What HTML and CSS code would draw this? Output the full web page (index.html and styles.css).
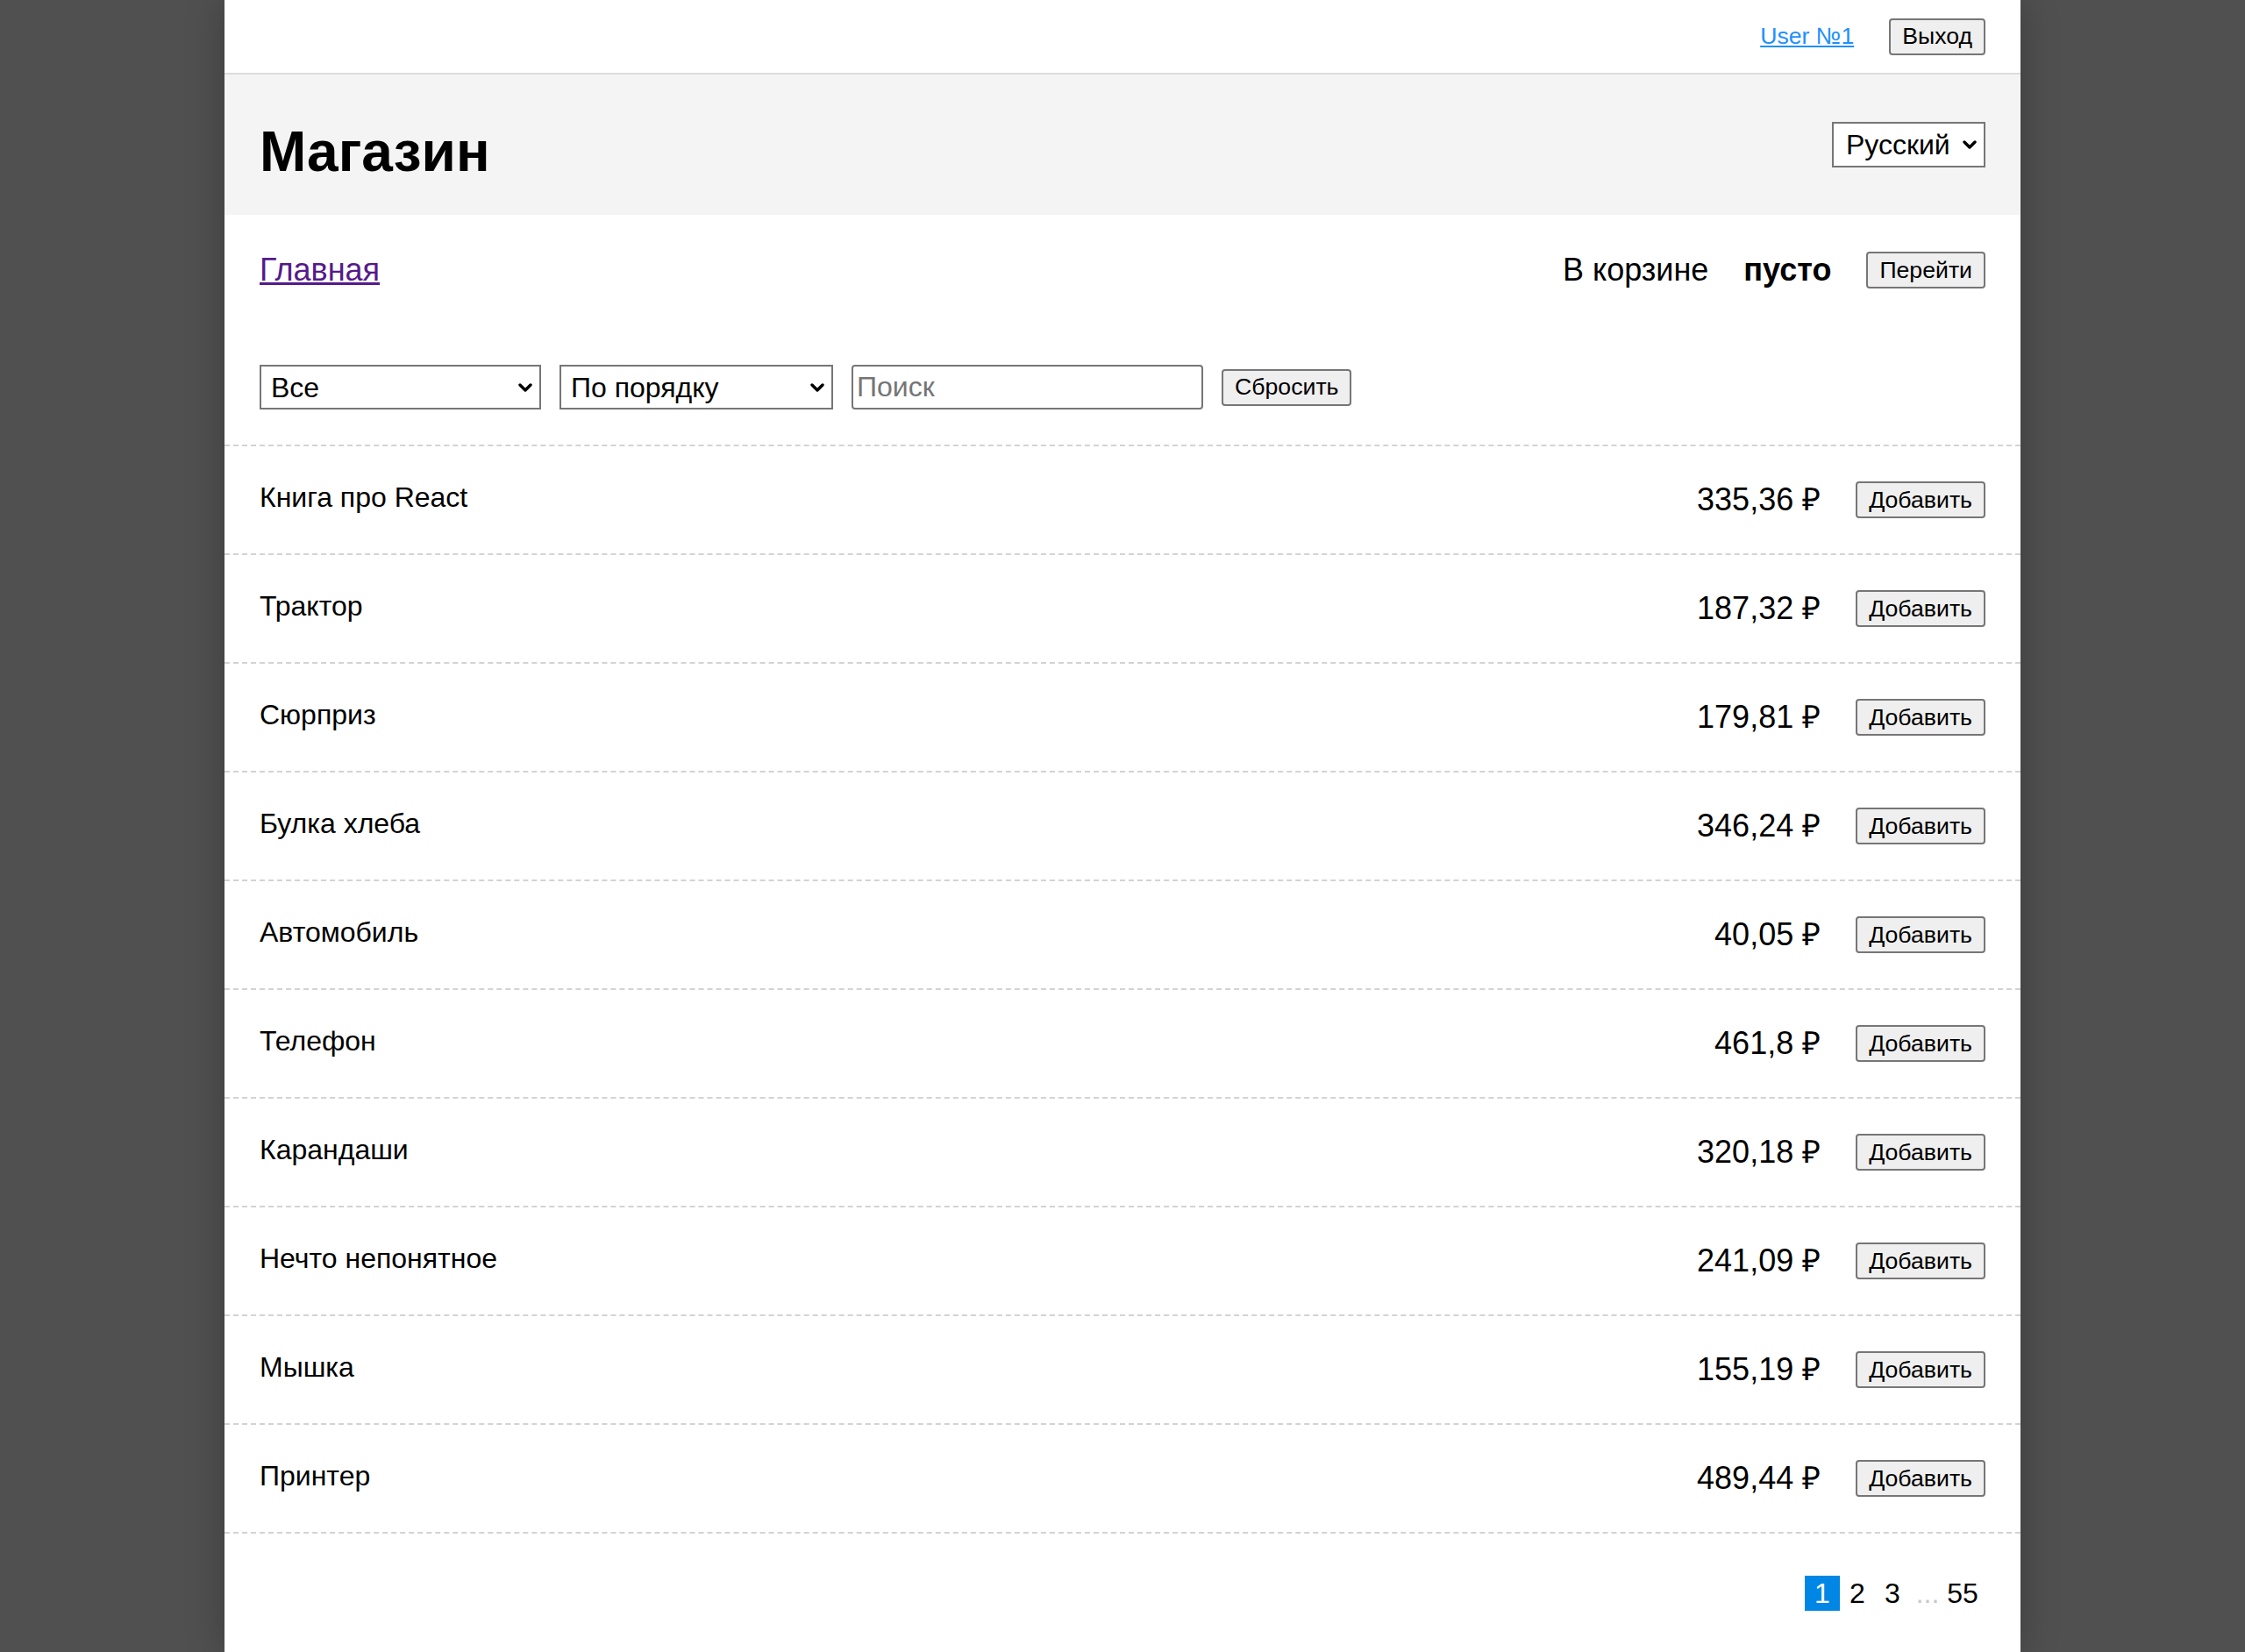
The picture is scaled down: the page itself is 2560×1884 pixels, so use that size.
FILE: index.html
```html
<!DOCTYPE html>
<html lang="ru">
<head>
<meta charset="utf-8">
<title>Магазин</title>
<link rel="stylesheet" href="styles.css">
</head>
<body>
<div class="page">
  <div class="topbar">
    <a class="user-link" href="#">User №1</a>
    <button class="btn">Выход</button>
  </div>
  <div class="header">
    <h1 class="title">Магазин</h1>
    <div class="select-wrap lang">
      <select class="select"><option>Русский</option></select>
      <svg class="chev" viewBox="0 0 16 10" width="16" height="10"><path d="M2 2 L8 8 L14 2" fill="none" stroke="#000" stroke-width="3.4" stroke-linecap="round" stroke-linejoin="round"/></svg>
    </div>
  </div>
  <div class="nav">
    <a class="home-link" href="#">Главная</a>
    <div class="cart">
      <span>В корзине</span>
      <b class="cart-empty">пусто</b>
      <button class="btn">Перейти</button>
    </div>
  </div>
  <div class="filters">
    <div class="select-wrap cat">
      <select class="select"><option>Все</option></select>
      <svg class="chev" viewBox="0 0 16 10" width="16" height="10"><path d="M2 2 L8 8 L14 2" fill="none" stroke="#000" stroke-width="3.4" stroke-linecap="round" stroke-linejoin="round"/></svg>
    </div>
    <div class="select-wrap sort">
      <select class="select"><option>По порядку</option></select>
      <svg class="chev" viewBox="0 0 16 10" width="16" height="10"><path d="M2 2 L8 8 L14 2" fill="none" stroke="#000" stroke-width="3.4" stroke-linecap="round" stroke-linejoin="round"/></svg>
    </div>
    <input class="search" type="text" placeholder="Поиск">
    <button class="btn">Сбросить</button>
  </div>
  <div class="list">
    <div class="item"><span class="name">Книга про React</span><span class="price">335,36 ₽</span><button class="btn">Добавить</button></div>
    <div class="item"><span class="name">Трактор</span><span class="price">187,32 ₽</span><button class="btn">Добавить</button></div>
    <div class="item"><span class="name">Сюрприз</span><span class="price">179,81 ₽</span><button class="btn">Добавить</button></div>
    <div class="item"><span class="name">Булка хлеба</span><span class="price">346,24 ₽</span><button class="btn">Добавить</button></div>
    <div class="item"><span class="name">Автомобиль</span><span class="price">40,05 ₽</span><button class="btn">Добавить</button></div>
    <div class="item"><span class="name">Телефон</span><span class="price">461,8 ₽</span><button class="btn">Добавить</button></div>
    <div class="item"><span class="name">Карандаши</span><span class="price">320,18 ₽</span><button class="btn">Добавить</button></div>
    <div class="item"><span class="name">Нечто непонятное</span><span class="price">241,09 ₽</span><button class="btn">Добавить</button></div>
    <div class="item"><span class="name">Мышка</span><span class="price">155,19 ₽</span><button class="btn">Добавить</button></div>
    <div class="item"><span class="name">Принтер</span><span class="price">489,44 ₽</span><button class="btn">Добавить</button></div>
  </div>
  <div class="pagination">
    <span class="page-item active">1</span>
    <span class="page-item">2</span>
    <span class="page-item">3</span>
    <span class="page-item dots">...</span>
    <span class="page-item">55</span>
  </div>
</div>
</body>
</html>
```
FILE: styles.css
```css
* { box-sizing: border-box; }

html, body {
  margin: 0;
  padding: 0;
}

body {
  background: #505050;
  font-family: "Liberation Sans", Arial, sans-serif;
  color: #000;
  font-size: 32px;
}

.page {
  width: 2048px;
  margin: 0 auto;
  min-height: 100vh;
  background: #fff;
  box-shadow: 0 0 40px rgba(0, 0, 0, 0.25);
}

.btn {
  font-family: "Liberation Sans", Arial, sans-serif;
  font-size: 26.67px;
  height: 42px;
  padding: 0 13px;
  border: 2px solid #767676;
  border-radius: 4px;
  background: #efefef;
  color: #000;
  line-height: 1;
}

/* top bar */
.topbar {
  height: 85px;
  border-bottom: 2px solid #dcdcdc;
  padding: 0 40px;
  display: flex;
  align-items: center;
  justify-content: flex-end;
  gap: 40px;
}

.user-link {
  color: #1e90ff;
  font-size: 26.67px;
  text-decoration: underline;
}

/* header */
.header {
  height: 160px;
  background: #f4f4f4;
  padding: 0 40px;
  display: flex;
  align-items: center;
  justify-content: space-between;
}

.title {
  margin: 16px 0 0 0;
  font-size: 64px;
  line-height: 64px;
  font-weight: bold;
}

.select-wrap {
  position: relative;
  display: inline-block;
}

.select {
  appearance: none;
  -webkit-appearance: none;
  font-family: "Liberation Sans", Arial, sans-serif;
  font-size: 32px;
  color: #000;
  background: #fff;
  border: 2px solid #767676;
  border-radius: 0;
  padding: 0 40px 0 11px;
  width: 100%;
  height: 100%;
}

.chev {
  position: absolute;
  right: 10px;
  top: 50%;
  margin-top: -5px;
  pointer-events: none;
}

.lang {
  width: 175px;
  height: 52px;
}

.lang .select {
  padding-left: 14px;
}

/* nav */
.nav {
  padding: 40px 40px 0;
  height: 86px;
  display: flex;
  align-items: center;
  justify-content: space-between;
  font-size: 36px;
}

.home-link {
  color: #551a8b;
  text-decoration: underline;
}

.cart {
  display: flex;
  align-items: center;
  gap: 40px;
}

.cart-empty {
  font-weight: bold;
}

/* filters */
.filters {
  margin-top: 85px;
  padding: 0 40px 40px;
  display: flex;
  align-items: center;
  gap: 21px;
}

.filters .select-wrap {
  height: 51px;
}

.cat { width: 321px; }
.sort { width: 312px; }

.search {
  width: 401px;
  height: 51px;
  font-family: "Liberation Sans", Arial, sans-serif;
  font-size: 32px;
  border: 2px solid #767676;
  border-radius: 4px;
  padding: 0 4px;
  color: #000;
}

.search::placeholder {
  color: #757575;
}

/* list */
.list {
  border-bottom: 2px dashed #d3d3d3;
}

.item {
  height: 124px;
  border-top: 2px dashed #d3d3d3;
  padding: 0 40px;
  display: flex;
  align-items: center;
}

.name {
  flex: 1;
  font-size: 32px;
  margin-bottom: 6px;
}

.price {
  font-size: 36px;
  margin-right: 40px;
  margin-bottom: 4px;
}

/* pagination */
.pagination {
  padding: 48px 46px 48px 40px;
  display: flex;
  justify-content: flex-end;
  font-size: 32px;
}

.page-item {
  min-width: 40px;
  height: 40px;
  line-height: 40px;
  text-align: center;
}

.page-item.active {
  background: #0087e6;
  color: #fff;
}

.page-item.dots {
  color: #c8c8c8;
}
```
